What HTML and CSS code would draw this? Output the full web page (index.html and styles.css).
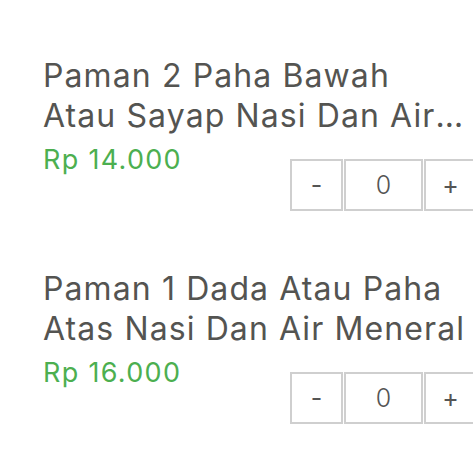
FILE: index.html
```html
<!DOCTYPE html>
<html lang="id">
<head>
    <meta charset="UTF-8">
    <meta name="viewport" content="width=device-width, initial-scale=1.0">
    <title>Menu</title>
    <link rel="stylesheet" href="styles.css">
</head>
<body>
    <div class="menu-list">
        <!-- item 1 -->
        <div class="item">
            <div class="title">Paman 2 Paha Bawah Atau Sayap Nasi Dan Air Meneral</div>
            <div class="bottom">
                <div class="price">Rp 14.000</div>
                <div class="stepper">
                    <span class="btn minus">-</span>
                    <span class="qty">0</span>
                    <span class="btn plus">+</span>
                </div>
            </div>
        </div>

        <!-- item 2 -->
        <div class="item">
            <div class="title">Paman 1 Dada Atau Paha Atas Nasi Dan Air Meneral</div>
            <div class="bottom">
                <div class="price">Rp 16.000</div>
                <div class="stepper">
                    <span class="btn minus">-</span>
                    <span class="qty">0</span>
                    <span class="btn plus">+</span>
                </div>
            </div>
        </div>
    </div>
</body>
</html>
```

FILE: styles.css
```css
body {
    margin: 0;
    font-family: Inter, Roboto, sans-serif;
    background: #fff;
    overflow: hidden;
}
.menu-list {
    width: 473px;
}
.item {
    padding: 56px 0 0 43px;
}
.item + .item {
    padding-top: 58px;
}
.title {
    width: 428px;
    font-size: 32px;
    line-height: 40px;
    letter-spacing: 1.1px;
    color: #545451;
    display: -webkit-box;
    -webkit-line-clamp: 2;
    -webkit-box-orient: vertical;
    overflow: hidden;
}
.bottom {
    display: flex;
    margin-top: 6px;
}
.price {
    flex-shrink: 0;
    width: 247px;
    font-size: 27px;
    line-height: 36px;
    letter-spacing: 1.3px;
    color: #4caf50;
}
.stepper {
    flex-shrink: 0;
    display: flex;
    gap: 1px;
    margin-top: 17px;
}
.btn,
.qty {
    flex-shrink: 0;
    height: 48px;
    border: 2px solid #cfcfcf;
    display: flex;
    align-items: center;
    justify-content: center;
    font-size: 25px;
    color: #555;
}
.btn {
    width: 49px;
}
.qty {
    width: 75px;
    font-weight: 300;
}
```
